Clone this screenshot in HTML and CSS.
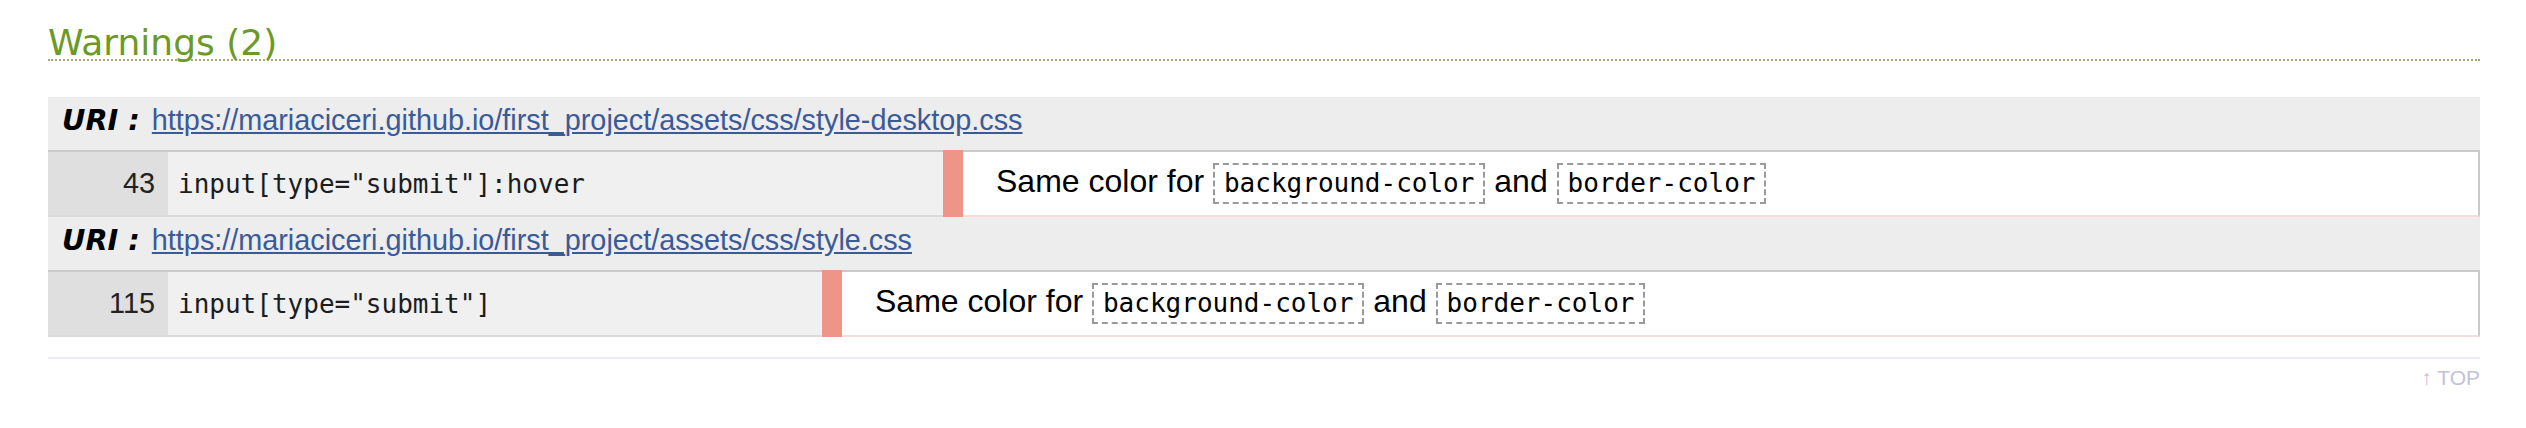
FILE: index.html
```html
<!DOCTYPE html>
<html lang="en">
<head>
<meta charset="utf-8">
<title>Warnings</title>
<link rel="stylesheet" href="styles.css">
</head>
<body>
<div class="page">
  <h2 class="title">Warnings (2)</h2>

  <div class="block">
    <div class="uri-row"><span class="uri-label">URI :</span> <a class="uri-link" href="#">https://mariaciceri.github.io/first_project/assets/css/style-desktop.css</a></div>
    <div class="code-row">
      <div class="ln">43</div>
      <div class="sel sel-a">input[type="submit"]:hover</div>
      <div class="bar"></div>
      <div class="msg"><span>Same color for <code class="prop">background-color</code> and <code class="prop">border-color</code></span></div>
    </div>
  </div>

  <div class="block">
    <div class="uri-row"><span class="uri-label">URI :</span> <a class="uri-link" href="#">https://mariaciceri.github.io/first_project/assets/css/style.css</a></div>
    <div class="code-row">
      <div class="ln">115</div>
      <div class="sel sel-b">input[type="submit"]</div>
      <div class="bar"></div>
      <div class="msg"><span>Same color for <code class="prop">background-color</code> and <code class="prop">border-color</code></span></div>
    </div>
  </div>

  <div class="footer">
    <a class="top-link" href="#">↑ TOP</a>
  </div>
</div>
</body>
</html>
```

FILE: styles.css
```css
* {
  box-sizing: border-box;
}

html, body {
  margin: 0;
  padding: 0;
  background: #ffffff;
}

.page {
  padding: 26px 46px 0 48px;
  font-family: "Liberation Sans", Arial, sans-serif;
}

.title {
  margin: 0;
  font-family: "DejaVu Sans", Verdana, sans-serif;
  font-weight: normal;
  font-size: 36px;
  line-height: 33px;
  color: #6b9a25;
  border-bottom: 2px dotted #a9a67b;
}

.title + .block {
  margin-top: 36px;
}

.uri-row {
  height: 53px;
  padding: 7px 0 0 14px;
  background: #ededed;
  font-size: 28.8px;
  line-height: 33px;
  white-space: nowrap;
}

.uri-label {
  margin-right: 4px;
  font-family: "DejaVu Sans", Verdana, sans-serif;
  font-weight: bold;
  font-style: italic;
  color: #000;
}

.uri-link {
  color: #3a5a98;
  text-decoration: underline;
}

.code-row {
  display: flex;
  height: 67px;
}

.ln {
  width: 120px;
  flex: none;
  display: flex;
  align-items: center;
  justify-content: flex-end;
  padding-right: 13px;
  background: #dfdfdf;
  border-top: 2px solid #cacaca;
  border-bottom: 2px solid #dadada;
  font-size: 28.8px;
  color: #222;
}

.sel {
  flex: none;
  display: flex;
  align-items: center;
  padding-left: 10px;
  background: #f0f0f0;
  border-top: 2px solid #cacaca;
  border-bottom: 2px solid #dadada;
  font-family: "DejaVu Sans Mono", "Liberation Mono", monospace;
  font-size: 26px;
  color: #1c1c1c;
  white-space: nowrap;
}

.sel-a {
  width: 775px;
}

.sel-b {
  width: 654px;
}

.bar {
  width: 20px;
  flex: none;
  background: #ee9588;
}

.msg {
  flex: 1;
  display: flex;
  align-items: center;
  padding-left: 33px;
  background: #fff;
  border-top: 2px solid #cacaca;
  border-right: 2px solid #cacaca;
  border-bottom: 2px solid #f8dcd8;
  font-size: 32px;
  color: #000;
  white-space: nowrap;
}

.prop {
  display: inline-block;
  padding: 3px 9px;
  border: 2px dashed #9a9a9a;
  font-family: "DejaVu Sans Mono", "Liberation Mono", monospace;
  font-size: 26px;
  line-height: 31px;
  vertical-align: middle;
}

.footer {
  margin-top: 20px;
  border-top: 2px solid #ecebfb;
  text-align: right;
  padding-top: 7px;
}

.top-link {
  font-size: 21px;
  color: #c3c1d8;
  text-decoration: none;
}
```
